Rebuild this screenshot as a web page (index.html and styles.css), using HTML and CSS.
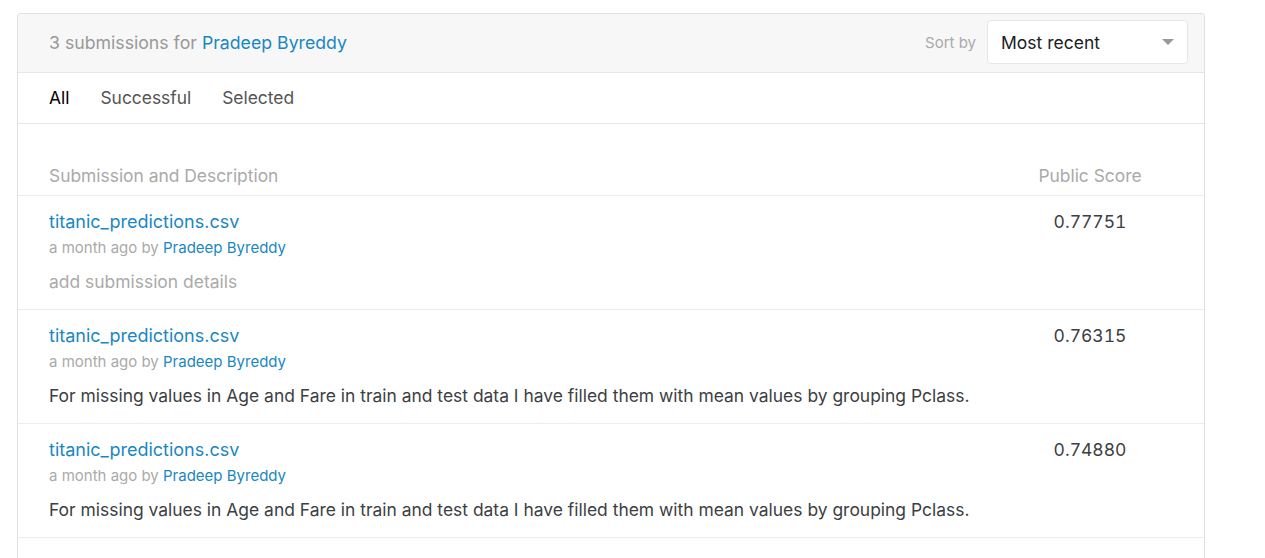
FILE: index.html
```html
<!DOCTYPE html>
<html>
<head>
<meta charset="utf-8">
<link rel="stylesheet" href="styles.css">
</head>
<body>
<div class="page">
  <div class="card">
    <div class="card-header">
      <div class="title">3 submissions for <a class="link">Pradeep Byreddy</a></div>
      <div class="sort">
        <span class="sort-label">Sort by</span>
        <div class="select">
          <span>Most recent</span>
          <span class="caret"></span>
        </div>
      </div>
    </div>
    <div class="tabs">
      <span class="tab active">All</span>
      <span class="tab">Successful</span>
      <span class="tab">Selected</span>
    </div>
    <div class="table">
      <div class="thead">
        <div class="col-main">Submission and Description</div>
        <div class="col-score">Public Score</div>
      </div>
      <div class="row">
        <div class="col-main">
          <div class="file">titanic_predictions.csv</div>
          <div class="meta">a month ago by <span class="link">Pradeep Byreddy</span></div>
          <div class="desc muted">add submission details</div>
        </div>
        <div class="col-score score">0.77751</div>
      </div>
      <div class="row">
        <div class="col-main">
          <div class="file">titanic_predictions.csv</div>
          <div class="meta">a month ago by <span class="link">Pradeep Byreddy</span></div>
          <div class="desc">For missing values in Age and Fare in train and test data I have filled them with mean values by grouping Pclass.</div>
        </div>
        <div class="col-score score">0.76315</div>
      </div>
      <div class="row">
        <div class="col-main">
          <div class="file">titanic_predictions.csv</div>
          <div class="meta">a month ago by <span class="link">Pradeep Byreddy</span></div>
          <div class="desc">For missing values in Age and Fare in train and test data I have filled them with mean values by grouping Pclass.</div>
        </div>
        <div class="col-score score">0.74880</div>
      </div>
    </div>
  </div>
</div>
</body>
</html>
```
FILE: styles.css
```css
html, body {
  margin: 0;
  padding: 0;
  background: #fff;
  font-family: Inter, "Noto Sans", sans-serif;
  color: #3c4043;
}
.page {
  padding: 13px 0 0 17px;
  width: 1188px;
}
.card {
  border: 1px solid #e0e0e0;
  border-bottom: none;
  border-radius: 4px 4px 0 0;
  background: #fff;
  height: 545px;
  overflow: hidden;
}
.card-header {
  background: #f7f7f7;
  height: 56px;
  padding: 0 16px 2px 31px;
  border-bottom: 1px solid #e6e6e6;
  display: flex;
  align-items: center;
  justify-content: space-between;
}
.title {
  font-size: 17.7px;
  color: #999;
}
.link {
  color: #1a87c3;
}
.sort {
  display: flex;
  align-items: center;
  gap: 11px;
}
.sort-label {
  font-size: 15px;
  color: #aaa;
}
.select {
  box-sizing: border-box;
  width: 201px;
  height: 44px;
  background: #fff;
  border: 1px solid #e6e6e6;
  border-radius: 4px;
  display: flex;
  align-items: center;
  justify-content: space-between;
  padding: 0 13px 0 13px;
  font-size: 17.5px;
  color: #202124;
}
.caret {
  width: 0;
  height: 0;
  border-left: 6px solid transparent;
  border-right: 6px solid transparent;
  border-top: 6px solid #999;
}
.tabs {
  height: 49px;
  padding-bottom: 1px;
  border-bottom: 1px solid #e6e6e6;
  display: flex;
  align-items: center;
  gap: 31px;
  padding-left: 31px;
  font-size: 17.4px;
  color: #555;
}
.tab.active {
  color: #000;
}
.thead {
  margin-top: 38px;
  height: 30px;
  border-bottom: 1px solid #ececec;
  display: flex;
  align-items: flex-start;
  font-size: 17.4px;
  color: #aaa;
  padding-top: 3px;
}
.col-main {
  flex: 1;
  padding-left: 31px;
}
.col-score {
  width: 166px;
  margin-right: 31px;
  text-align: center;
}
.row {
  display: flex;
  border-bottom: 1px solid #ececec;
  box-sizing: border-box;
  height: 114px;
}
.file {
  margin-top: 15px;
  font-size: 18px;
  color: #1a87c3;
  line-height: 22px;
}
.meta {
  margin-top: 6px;
  font-size: 15px;
  color: #aaa;
  line-height: 18px;
}
.desc {
  margin-top: 14px;
  font-size: 17.46px;
  line-height: 22px;
  color: #3c4043;
}
.desc.muted {
  color: #aaa;
}
.score {
  margin-top: 15px;
  font-size: 17.5px;
  line-height: 22px;
  color: #3c4043;
  font-variant-numeric: tabular-nums;
}
```
